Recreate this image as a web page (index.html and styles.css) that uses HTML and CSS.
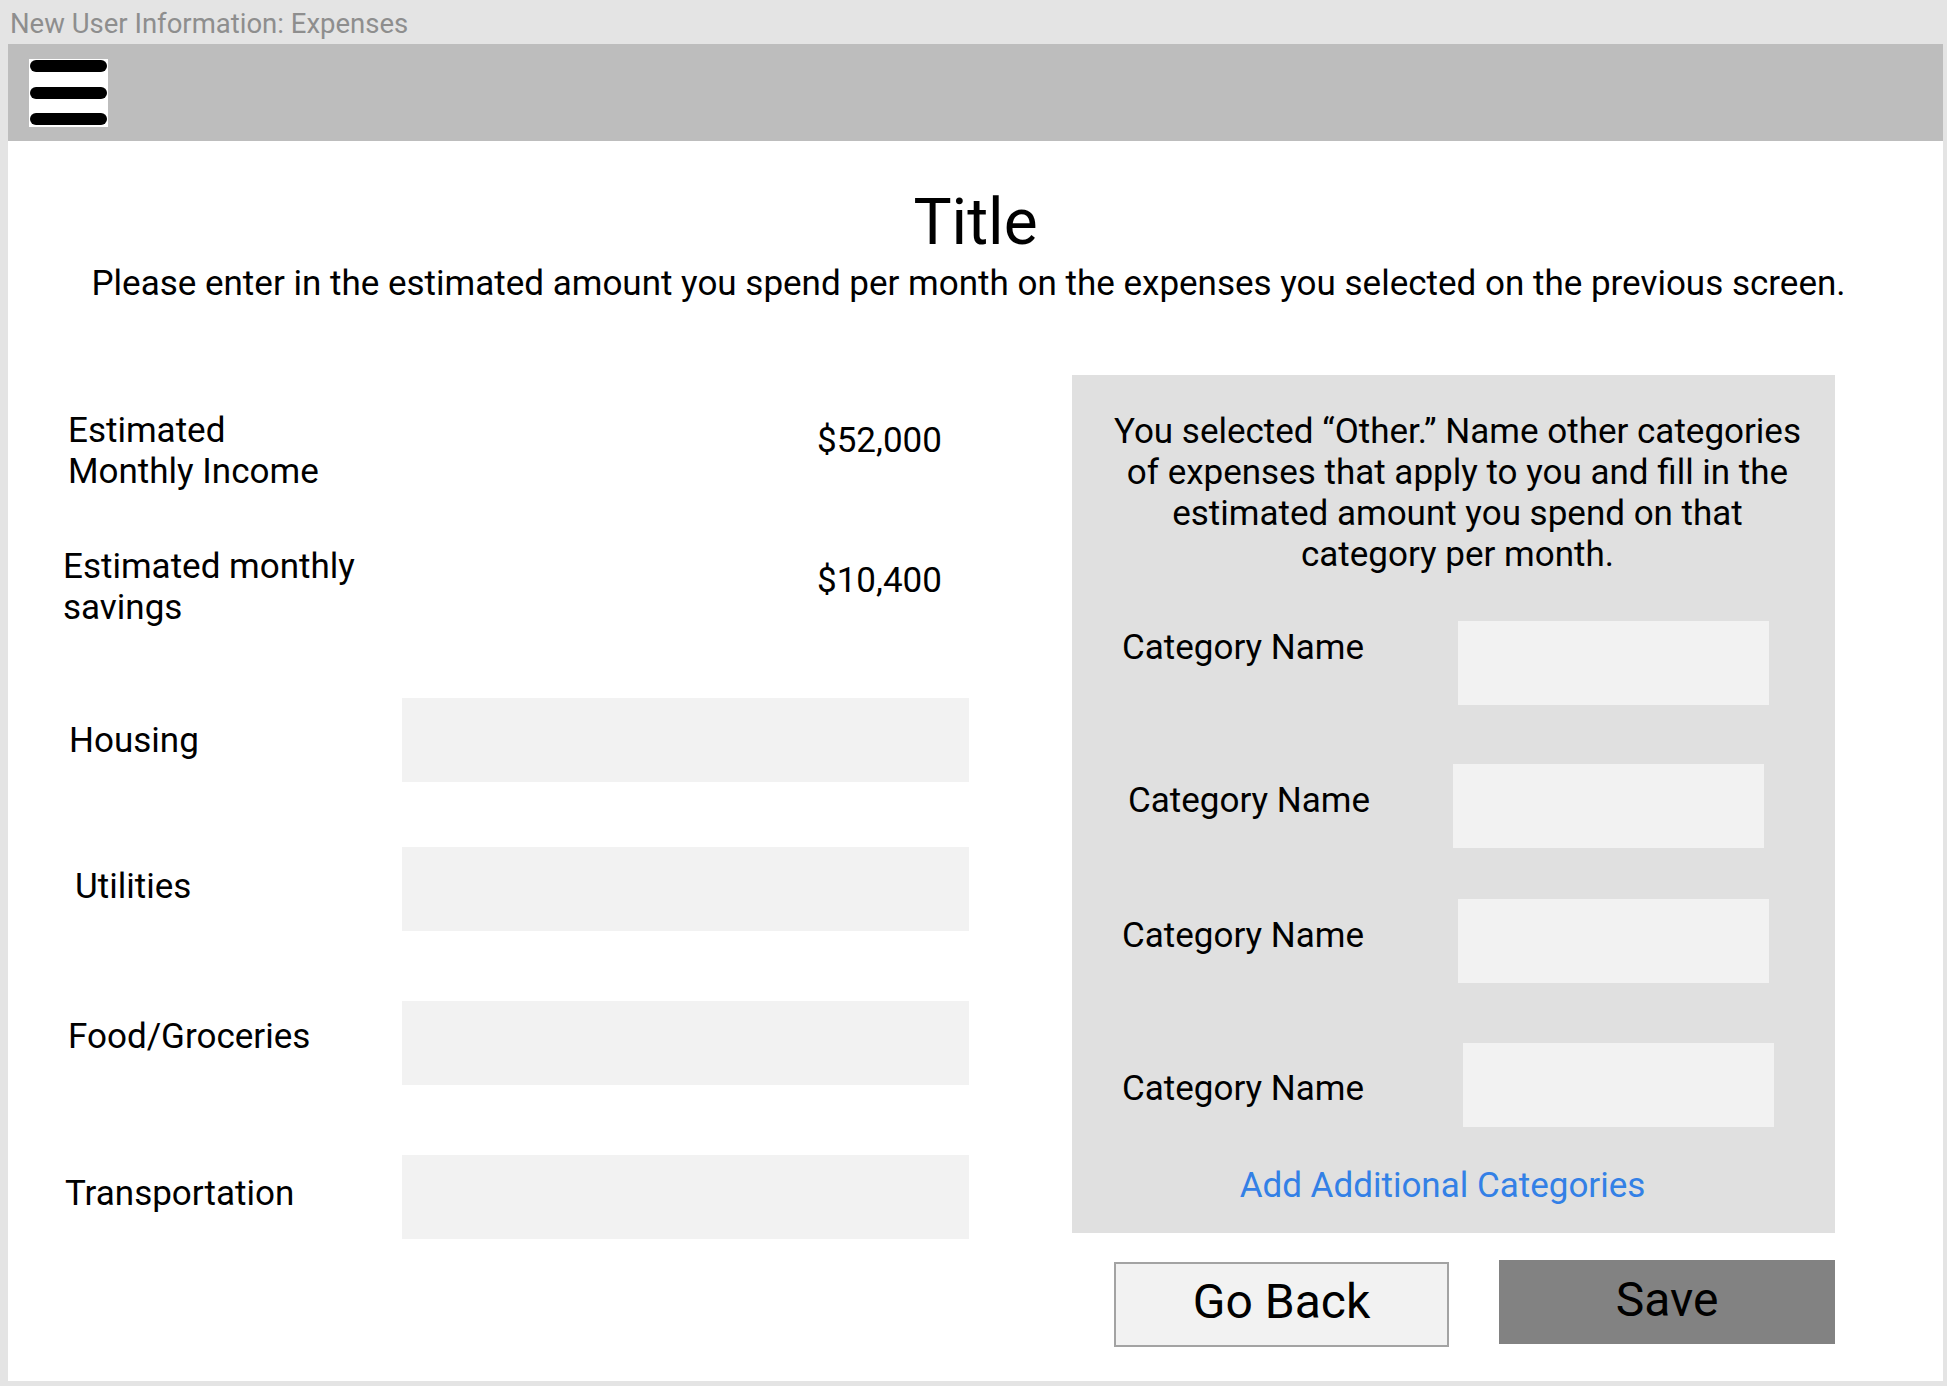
FILE: index.html
```html
<!DOCTYPE html>
<html lang="en">
<head>
<meta charset="utf-8">
<title>New User Information: Expenses</title>
<link rel="stylesheet" href="styles.css">
</head>
<body>
<div class="app">
  <div class="window-title">New User Information: Expenses</div>
  <div class="frame">
    <header class="topbar">
      <div class="menu-btn">
        <svg width="79" height="68" viewBox="0 0 79 68" aria-hidden="true">
          <rect x="0" y="0" width="79" height="68" fill="#ffffff"/>
          <rect x="1" y="1" width="77" height="12" rx="6" fill="#000000"/>
          <rect x="1" y="28" width="77" height="12" rx="6" fill="#000000"/>
          <rect x="1" y="54" width="77" height="12" rx="6" fill="#000000"/>
        </svg>
      </div>
    </header>
    <main class="content">
      <h1 class="title">Title</h1>
      <p class="subtitle">Please enter in the estimated amount you spend per month on the expenses you selected on the previous screen.</p>
      <div class="columns">
        <section class="left">
          <div class="stat-row">
            <div class="label pad-5">Estimated<br>Monthly Income</div>
            <div class="value">$52,000</div>
          </div>
          <div class="stat-row stat-row--savings">
            <div class="label">Estimated monthly<br>savings</div>
            <div class="value">$10,400</div>
          </div>
          <div class="field-row">
            <div class="label pad-6">Housing</div>
            <div class="field"></div>
          </div>
          <div class="field-row field-row--tight">
            <div class="label pad-12 raise-xs">Utilities</div>
            <div class="field"></div>
          </div>
          <div class="field-row">
            <div class="label pad-5 raise">Food/Groceries</div>
            <div class="field"></div>
          </div>
          <div class="field-row">
            <div class="label pad-2 raise-sm">Transportation</div>
            <div class="field"></div>
          </div>
        </section>
        <section class="right">
          <div class="panel">
            <p class="panel-text">You selected “Other.” Name other categories<br>of expenses that apply to you and fill in the<br>estimated amount you spend on that<br>category per month.</p>
            <div class="cat-row cat-row--first">
              <div class="cat-label">Category Name</div>
              <div class="cat-field"></div>
            </div>
            <div class="cat-row cat-row--second">
              <div class="cat-label">Category Name</div>
              <div class="cat-field"></div>
            </div>
            <div class="cat-row cat-row--third">
              <div class="cat-label">Category Name</div>
              <div class="cat-field"></div>
            </div>
            <div class="cat-row cat-row--fourth">
              <div class="cat-label">Category Name</div>
              <div class="cat-field"></div>
            </div>
            <div class="link-row"><a class="add-link" href="#">Add Additional Categories</a></div>
          </div>
          <div class="actions">
            <button class="btn btn-back" type="button">Go Back</button>
            <button class="btn btn-save" type="button">Save</button>
          </div>
        </section>
      </div>
    </main>
  </div>
</div>
</body>
</html>
```
FILE: styles.css
```css
* { box-sizing: border-box; }

html, body {
  margin: 0;
  padding: 0;
}

body {
  background: #e4e4e4;
  font-family: Roboto, "Liberation Sans", Arial, sans-serif;
  color: #000;
  width: 1947px;
  height: 1386px;
  overflow: hidden;
}

.window-title {
  height: 44px;
  padding: 3px 0 0 10px;
  font-size: 27.5px;
  line-height: 41px;
  color: #8e8e8e;
}

.frame {
  margin: 0 4px 0 8px;
  height: 1337px;
  background: #ffffff;
}

.topbar {
  height: 97px;
  background: #bdbdbd;
  display: flex;
  align-items: center;
  padding-left: 21px;
}

.menu-btn {
  width: 79px;
  height: 68px;
  display: flex;
  margin-top: 1px;
}

.content {
  display: flex;
  flex-direction: column;
}

.title {
  margin: 44px 0 0 0;
  font-size: 64px;
  line-height: 75px;
  font-weight: 400;
  text-align: center;
}

.subtitle {
  margin: 4px 14px 0 0;
  font-size: 35px;
  line-height: 39px;
  text-align: center;
}

.columns {
  display: flex;
  margin-top: 72px;
  padding-left: 55px;
}

/* left column */
.left {
  width: 906px;
  padding-top: 35px;
  display: flex;
  flex-direction: column;
}

.label {
  font-size: 35px;
  line-height: 41px;
}

.pad-2 { padding-left: 2px; }
.pad-5 { padding-left: 5px; }
.pad-6 { padding-left: 6px; }
.pad-12 { padding-left: 12px; }
.raise { margin-bottom: 14px; }
.raise-sm { margin-bottom: 8px; }
.raise-xs { margin-bottom: 6px; }

.stat-row {
  display: grid;
  grid-template-columns: 339px 567px;
  align-items: start;
}

.stat-row + .stat-row { margin-top: 54px; }

.value {
  font-size: 35px;
  line-height: 41px;
  padding-left: 415px;
  margin-top: 10px;
  white-space: nowrap;
}

.stat-row--savings .value { margin-top: 14px; }

.field-row {
  display: grid;
  grid-template-columns: 339px 567px;
  align-items: center;
  margin-top: 70px;
}

.field-row--tight { margin-top: 65px; }

.stat-row + .field-row { margin-top: 70px; }

.field {
  height: 84px;
  background: #f2f2f2;
}

/* right column */
.right {
  width: 763px;
  margin-left: 103px;
  display: flex;
  flex-direction: column;
}

.panel {
  height: 858px;
  background: #e0e0e0;
  padding-top: 36px;
  display: flex;
  flex-direction: column;
}

.panel-text {
  margin: 0;
  font-size: 35px;
  line-height: 41px;
  text-align: center;
  padding-left: 8px;
}

.cat-row {
  display: grid;
  grid-template-columns: 336px 311px;
  align-items: center;
  padding-left: 50px;
}

.cat-label {
  font-size: 35px;
  line-height: 41px;
  white-space: nowrap;
  margin-bottom: 12px;
}

.cat-field {
  height: 84px;
  background: #f2f2f2;
}

.cat-row--first { margin-top: 46px; }
.cat-row--first .cat-label { margin-bottom: 32px; }

.cat-row--second {
  margin-top: 59px;
  padding-left: 56px;
  grid-template-columns: 325px 311px;
}

.cat-row--third { margin-top: 51px; }

.cat-row--fourth {
  margin-top: 60px;
  grid-template-columns: 341px 311px;
}
.cat-row--fourth .cat-label { margin-bottom: 0; margin-top: 6px; }

.link-row {
  margin-top: 38px;
  text-align: center;
  padding-right: 22px;
}

.add-link {
  font-size: 35px;
  line-height: 41px;
  color: #3380e6;
  text-decoration: none;
}

.actions {
  display: flex;
  align-items: flex-start;
  margin-top: 27px;
  padding-left: 42px;
  gap: 50px;
}

.btn {
  font-family: Roboto, "Liberation Sans", Arial, sans-serif;
  font-size: 48px;
  color: #000;
  display: flex;
  align-items: center;
  justify-content: center;
  padding: 0 0 6px 0;
  cursor: pointer;
}

.btn-back {
  width: 335px;
  height: 85px;
  margin-top: 2px;
  background: #f2f2f2;
  border: 2px solid #a3a3a3;
}

.btn-save {
  width: 336px;
  height: 84px;
  background: #828282;
  border: none;
}
```
